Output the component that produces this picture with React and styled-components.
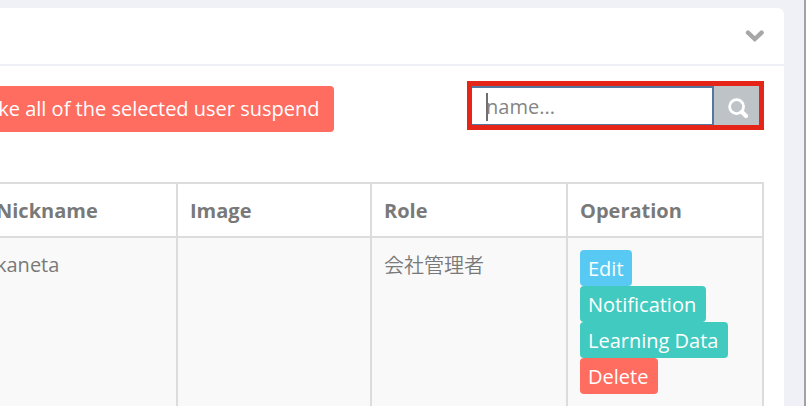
import React from "react";
import styled, { createGlobalStyle } from "styled-components";

const GlobalStyle = createGlobalStyle`
  * { box-sizing: border-box; }
  body {
    margin: 0;
    overflow: hidden;
    background: #f0f1f7;
    color: #797979;
    font-family: "Open Sans", "Noto Sans CJK JP", sans-serif;
    font-size: 20px;
    line-height: 28px;
    -webkit-font-smoothing: antialiased;
  }
`;

const Page = styled.div`
  width: 806px;
  height: 406px;
  overflow: hidden;
  padding: 8px 20px 0 0;
  border-right: 2px solid #a2a2a5;
`;

const Panel = styled.section`
  height: 398px;
  overflow: hidden;
  background: #fff;
  border-radius: 0 6px 0 0;
`;

const PanelHeader = styled.header`
  display: flex;
  justify-content: flex-end;
  height: 58px;
  padding: 22px 20px 0 0;
  border-bottom: 2px solid #eff0f5;
`;

const Toolbar = styled.div`
  display: flex;
  justify-content: space-between;
  height: 116px;
  padding: 15px 20px 0 0;
`;

const SuspendButton = styled.button`
  display: flex;
  align-items: center;
  justify-content: flex-end;
  width: 334px;
  height: 46px;
  margin-top: 5px;
  padding: 0 14.5px 0 0;
  border: 0;
  border-radius: 0 4px 4px 0;
  background: #ff6c60;
  color: #fff;
  font: inherit;
  white-space: nowrap;
  overflow: hidden;
`;

const SearchGroup = styled.div`
  display: flex;
  width: 297px;
  height: 49px;
  border: 5px solid #e42518;
`;

const SearchField = styled.div`
  display: flex;
  align-items: center;
  flex: 1;
  padding: 1px 0 0 14px;
  border: solid #54779f;
  border-width: 2px 2px 1px 0;
  background: #fff;
`;

const Caret = styled.span`
  width: 2px;
  height: 28px;
  margin-right: -2px;
  background: #6e6e6e;
`;

const Placeholder = styled.span`
  color: #858585;
`;

const SearchButton = styled.button`
  display: flex;
  width: 45px;
  padding: 12px 0 0 14px;
  border: 0;
  background: #bdc3c7;
`;

const Table = styled.div`
  display: grid;
  grid-template-columns: 194px 194px 196px 196px;
  width: 780px;
  margin-left: -16px;
  border-top: 2px solid #dcdcdc;
`;

const Cell = styled.div`
  height: ${(p) => (p.$head ? "54px" : "180px")};
  padding: 13px 12px 0;
  border-right: 2px solid #dcdcdc;
  border-bottom: 2px solid #dcdcdc;
  background: ${(p) => (p.$head ? "#fff" : "#f9f9f9")};
  font-weight: ${(p) => (p.$head ? 700 : 400)};
  white-space: nowrap;
`;

const OperationCell = styled(Cell)`
  padding-top: 12px;
`;

const RoleName = styled.span`
  font-family: "Noto Sans CJK JP", sans-serif;
  font-weight: 350;
`;

const Actions = styled.div`
  display: flex;
  flex-direction: column;
  align-items: flex-start;
`;

const ActionButton = styled.button`
  width: ${(p) => p.$width}px;
  height: 36px;
  padding: 2px 8px 0;
  border: 0;
  border-radius: 4px;
  background: ${(p) => p.$color};
  color: #fff;
  font: inherit;
  line-height: 34px;
  text-align: left;
`;

const columns = ["Nickname", "Image", "Role", "Operation"];
const actions = [
  ["Edit", "#58c9f3", 52],
  ["Notification", "#41cac0", 126],
  ["Learning Data", "#41cac0", 148],
  ["Delete", "#ff6c60", 78],
];

export default function App() {
  return (
    <>
      <GlobalStyle />
      <Page>
        <Panel>
          <PanelHeader>
            <svg width="19" height="12" viewBox="0 0 19 12">
              <path d="M3 2.7L9.8 9L16.6 2.7" fill="none" stroke="#a7a7a7" strokeWidth="4.4" strokeLinecap="round" />
            </svg>
          </PanelHeader>
          <Toolbar>
            <SuspendButton>Make all of the selected user suspend</SuspendButton>
            <SearchGroup>
              <SearchField>
                <Caret />
                <Placeholder>name...</Placeholder>
              </SearchField>
              <SearchButton aria-label="Search">
                <svg width="21" height="21" viewBox="0 0 21 21" fill="none" stroke="#fff">
                  <circle cx="8.6" cy="8.6" r="7" strokeWidth="2.8" />
                  <path d="M14 14L18 18" strokeWidth="4.2" strokeLinecap="round" />
                </svg>
              </SearchButton>
            </SearchGroup>
          </Toolbar>
          <Table>
            {columns.map((name) => (
              <Cell key={name} $head>{name}</Cell>
            ))}
            <Cell>kaneta</Cell>
            <Cell />
            <Cell><RoleName>会社管理者</RoleName></Cell>
            <OperationCell>
              <Actions>
                {actions.map(([label, color, width]) => (
                  <ActionButton key={label} $color={color} $width={width}>{label}</ActionButton>
                ))}
              </Actions>
            </OperationCell>
          </Table>
        </Panel>
      </Page>
    </>
  );
}
